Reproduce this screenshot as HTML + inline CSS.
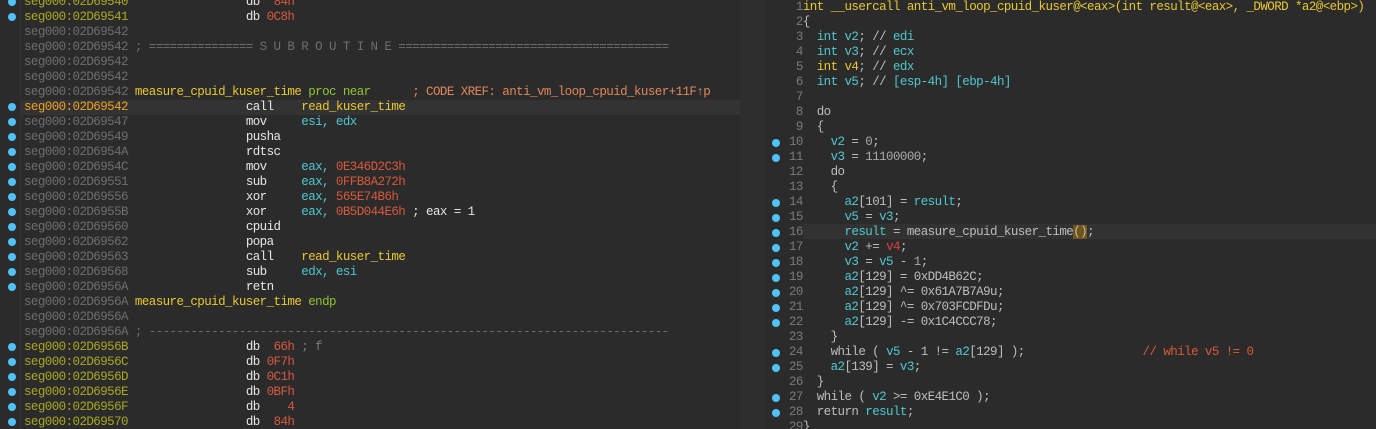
<!DOCTYPE html>
<html><head><meta charset="utf-8"><style>
html,body{margin:0;padding:0;width:1376px;height:429px;overflow:hidden;background:#2b2b2b}
body{font-family:"Liberation Mono",monospace;font-size:12.5px;letter-spacing:-0.57px;position:relative}
.pane{position:absolute;top:0;height:429px;overflow:hidden}
#L{left:0;width:740px;background:#2b2b2b}
#M{left:740px;width:25px;background:#2e2e2e}
#R{left:765px;width:611px;background:#2b2b2b}
.gut{position:absolute;left:0;top:0;width:20px;height:429px;border-right:1px solid #353535}
.row{position:absolute;left:0;height:15px;line-height:15px;white-space:pre;width:100%}
.dot{position:absolute;width:8px;height:8px;border-radius:50%;background:#4fc3f7}
.a{color:#6e6e6e}.ao{color:#a8a820}.ah{color:#f0a020}
.m{color:#e6e6e6}.y{color:#e8c830}.c{color:#4ec9d0}.n{color:#d8583c}.g{color:#7a7a7a}
.gr{color:#8fc62a}.x{color:#e0875a}.w{color:#bdbdbd}.ln{color:#7a7a7a}.num{color:#a8a8a8}.r{color:#e04040}.cm{color:#d85a3a}
</style></head><body>
<div class="pane" id="L"><div class="gut"></div>
<div class="row" style="top:100px;left:21px;background:#333"></div>
</div>
<div class="pane" id="M"></div>
<div class="pane" id="R">
<div class="row" style="top:224px;left:38px;background:#323232"></div>
</div>
<div style="position:absolute;left:0;top:0">
<div class="row" style="top:-5px;left:24px"><span class="ao">seg000:02D69540</span>                 <span class="m">db</span>  <span class="n">84h</span></div>
<div class="row" style="top:10px;left:24px"><span class="ao">seg000:02D69541</span>                 <span class="m">db</span> <span class="n">0C8h</span></div>
<div class="row" style="top:25px;left:24px"><span class="a">seg000:02D69542</span></div>
<div class="row" style="top:40px;left:24px"><span class="a">seg000:02D69542 ; =============== S U B R O U T I N E =======================================</span></div>
<div class="row" style="top:55px;left:24px"><span class="a">seg000:02D69542</span></div>
<div class="row" style="top:70px;left:24px"><span class="a">seg000:02D69542</span></div>
<div class="row" style="top:85px;left:24px"><span class="a">seg000:02D69542</span> <span class="y">measure_cpuid_kuser_time</span> <span class="gr">proc near</span>      <span class="x">; CODE XREF: anti_vm_loop_cpuid_kuser+11F↑p</span></div>
<div class="row" style="top:100px;left:24px"><span class="ah">seg000:02D69542</span>                 <span class="m">call</span>    <span class="y">read_kuser_time</span></div>
<div class="row" style="top:115px;left:24px"><span class="a">seg000:02D69547</span>                 <span class="m">mov</span>     <span class="c">esi, edx</span></div>
<div class="row" style="top:130px;left:24px"><span class="a">seg000:02D69549</span>                 <span class="m">pusha</span></div>
<div class="row" style="top:145px;left:24px"><span class="a">seg000:02D6954A</span>                 <span class="m">rdtsc</span></div>
<div class="row" style="top:160px;left:24px"><span class="a">seg000:02D6954C</span>                 <span class="m">mov</span>     <span class="c">eax, </span><span class="n">0E346D2C3h</span></div>
<div class="row" style="top:175px;left:24px"><span class="a">seg000:02D69551</span>                 <span class="m">sub</span>     <span class="c">eax, </span><span class="n">0FFB8A272h</span></div>
<div class="row" style="top:190px;left:24px"><span class="a">seg000:02D69556</span>                 <span class="m">xor</span>     <span class="c">eax, </span><span class="n">565E74B6h</span></div>
<div class="row" style="top:205px;left:24px"><span class="a">seg000:02D6955B</span>                 <span class="m">xor</span>     <span class="c">eax, </span><span class="n">0B5D044E6h</span> <span class="m">; eax = 1</span></div>
<div class="row" style="top:220px;left:24px"><span class="a">seg000:02D69560</span>                 <span class="m">cpuid</span></div>
<div class="row" style="top:235px;left:24px"><span class="a">seg000:02D69562</span>                 <span class="m">popa</span></div>
<div class="row" style="top:250px;left:24px"><span class="a">seg000:02D69563</span>                 <span class="m">call</span>    <span class="y">read_kuser_time</span></div>
<div class="row" style="top:265px;left:24px"><span class="a">seg000:02D69568</span>                 <span class="m">sub</span>     <span class="c">edx, esi</span></div>
<div class="row" style="top:280px;left:24px"><span class="a">seg000:02D6956A</span>                 <span class="m">retn</span></div>
<div class="row" style="top:295px;left:24px"><span class="a">seg000:02D6956A</span> <span class="y">measure_cpuid_kuser_time</span> <span class="gr">endp</span></div>
<div class="row" style="top:310px;left:24px"><span class="a">seg000:02D6956A</span></div>
<div class="row" style="top:325px;left:24px"><span class="a">seg000:02D6956A ; ---------------------------------------------------------------------------</span></div>
<div class="row" style="top:340px;left:24px"><span class="ao">seg000:02D6956B</span>                 <span class="m">db</span>  <span class="n">66h</span> <span class="g">; f</span></div>
<div class="row" style="top:355px;left:24px"><span class="ao">seg000:02D6956C</span>                 <span class="m">db</span> <span class="n">0F7h</span></div>
<div class="row" style="top:370px;left:24px"><span class="ao">seg000:02D6956D</span>                 <span class="m">db</span> <span class="n">0C1h</span></div>
<div class="row" style="top:385px;left:24px"><span class="ao">seg000:02D6956E</span>                 <span class="m">db</span> <span class="n">0BFh</span></div>
<div class="row" style="top:400px;left:24px"><span class="ao">seg000:02D6956F</span>                 <span class="m">db</span>    <span class="n">4</span></div>
<div class="row" style="top:415px;left:24px"><span class="ao">seg000:02D69570</span>                 <span class="m">db</span>  <span class="n">84h</span></div>
<div class="dot" style="left:8px;top:-2px"></div><div class="dot" style="left:8px;top:13px"></div>
<div class="dot" style="left:8px;top:103px"></div><div class="dot" style="left:8px;top:118px"></div><div class="dot" style="left:8px;top:133px"></div><div class="dot" style="left:8px;top:148px"></div><div class="dot" style="left:8px;top:163px"></div><div class="dot" style="left:8px;top:178px"></div><div class="dot" style="left:8px;top:193px"></div><div class="dot" style="left:8px;top:208px"></div><div class="dot" style="left:8px;top:223px"></div><div class="dot" style="left:8px;top:238px"></div><div class="dot" style="left:8px;top:253px"></div><div class="dot" style="left:8px;top:268px"></div><div class="dot" style="left:8px;top:283px"></div>
<div class="dot" style="left:8px;top:343px"></div><div class="dot" style="left:8px;top:358px"></div><div class="dot" style="left:8px;top:373px"></div><div class="dot" style="left:8px;top:388px"></div><div class="dot" style="left:8px;top:403px"></div><div class="dot" style="left:8px;top:418px"></div>
<div class="row" style="top:0px;left:789px"><span class="ln"> 1</span><span class="y">int __usercall anti_vm_loop_cpuid_kuser@&lt;eax&gt;(int result@&lt;eax&gt;, _DWORD *a2@&lt;ebp&gt;)</span></div>
<div class="row" style="top:15px;left:789px"><span class="ln"> 2</span><span class="w">{</span></div>
<div class="row" style="top:30px;left:789px"><span class="ln"> 3</span><span class="c">  int v2</span><span class="w">; // </span><span class="c">edi</span></div>
<div class="row" style="top:45px;left:789px"><span class="ln"> 4</span><span class="c">  int v3</span><span class="w">; // </span><span class="c">ecx</span></div>
<div class="row" style="top:60px;left:789px"><span class="ln"> 5</span><span class="y">  int v4</span><span class="w">; // </span><span class="c">edx</span></div>
<div class="row" style="top:75px;left:789px"><span class="ln"> 6</span><span class="c">  int v5</span><span class="w">; // </span><span class="c">[esp-4h] [ebp-4h]</span></div>
<div class="row" style="top:90px;left:789px"><span class="ln"> 7</span></div>
<div class="row" style="top:105px;left:789px"><span class="ln"> 8</span><span class="w">  do</span></div>
<div class="row" style="top:120px;left:789px"><span class="ln"> 9</span><span class="w">  {</span></div>
<div class="row" style="top:135px;left:789px"><span class="ln">10</span><span class="c">    v2</span><span class="w"> = </span><span class="num">0</span><span class="w">;</span></div>
<div class="row" style="top:150px;left:789px"><span class="ln">11</span><span class="c">    v3</span><span class="w"> = </span><span class="num">11100000</span><span class="w">;</span></div>
<div class="row" style="top:165px;left:789px"><span class="ln">12</span><span class="w">    do</span></div>
<div class="row" style="top:180px;left:789px"><span class="ln">13</span><span class="w">    {</span></div>
<div class="row" style="top:195px;left:789px"><span class="ln">14</span><span class="c">      a2</span><span class="w">[101] = </span><span class="c">result</span><span class="w">;</span></div>
<div class="row" style="top:210px;left:789px"><span class="ln">15</span><span class="c">      v5</span><span class="w"> = </span><span class="c">v3</span><span class="w">;</span></div>
<div class="row" style="top:225px;left:789px"><span class="ln">16</span><span class="c">      result</span><span class="w"> = measure_cpuid_kuser_time<span style="background:#6e5418">()</span>;</span></div>
<div class="row" style="top:240px;left:789px"><span class="ln">17</span><span class="c">      v2</span><span class="w"> += </span><span class="r">v4</span><span class="w">;</span></div>
<div class="row" style="top:255px;left:789px"><span class="ln">18</span><span class="c">      v3</span><span class="w"> = </span><span class="c">v5</span><span class="w"> - </span><span class="num">1</span><span class="w">;</span></div>
<div class="row" style="top:270px;left:789px"><span class="ln">19</span><span class="c">      a2</span><span class="w">[129] = 0xDD4B62C;</span></div>
<div class="row" style="top:285px;left:789px"><span class="ln">20</span><span class="c">      a2</span><span class="w">[129] ^= 0x61A7B7A9u;</span></div>
<div class="row" style="top:300px;left:789px"><span class="ln">21</span><span class="c">      a2</span><span class="w">[129] ^= 0x703FCDFDu;</span></div>
<div class="row" style="top:315px;left:789px"><span class="ln">22</span><span class="c">      a2</span><span class="w">[129] -= 0x1C4CCC78;</span></div>
<div class="row" style="top:330px;left:789px"><span class="ln">23</span><span class="w">    }</span></div>
<div class="row" style="top:345px;left:789px"><span class="ln">24</span><span class="w">    while ( </span><span class="c">v5</span><span class="w"> - 1 != </span><span class="c">a2</span><span class="w">[129] );                 </span><span class="cm">// while v5 != 0</span></div>
<div class="row" style="top:360px;left:789px"><span class="ln">25</span><span class="c">    a2</span><span class="w">[139] = </span><span class="c">v3</span><span class="w">;</span></div>
<div class="row" style="top:375px;left:789px"><span class="ln">26</span><span class="w">  }</span></div>
<div class="row" style="top:390px;left:789px"><span class="ln">27</span><span class="w">  while ( </span><span class="c">v2</span><span class="w"> &gt;= 0xE4E1C0 );</span></div>
<div class="row" style="top:405px;left:789px"><span class="ln">28</span><span class="w">  return </span><span class="c">result</span><span class="w">;</span></div>
<div class="row" style="top:420px;left:789px"><span class="ln">29</span><span class="w">}</span></div>
<div class="dot" style="left:772px;top:139px"></div><div class="dot" style="left:772px;top:154px"></div>
<div class="dot" style="left:772px;top:199px"></div><div class="dot" style="left:772px;top:214px"></div><div class="dot" style="left:772px;top:229px"></div><div class="dot" style="left:772px;top:244px"></div><div class="dot" style="left:772px;top:259px"></div><div class="dot" style="left:772px;top:274px"></div><div class="dot" style="left:772px;top:289px"></div><div class="dot" style="left:772px;top:304px"></div><div class="dot" style="left:772px;top:319px"></div>
<div class="dot" style="left:772px;top:349px"></div><div class="dot" style="left:772px;top:364px"></div><div class="dot" style="left:772px;top:394px"></div><div class="dot" style="left:772px;top:409px"></div>
</div>
</body></html>
